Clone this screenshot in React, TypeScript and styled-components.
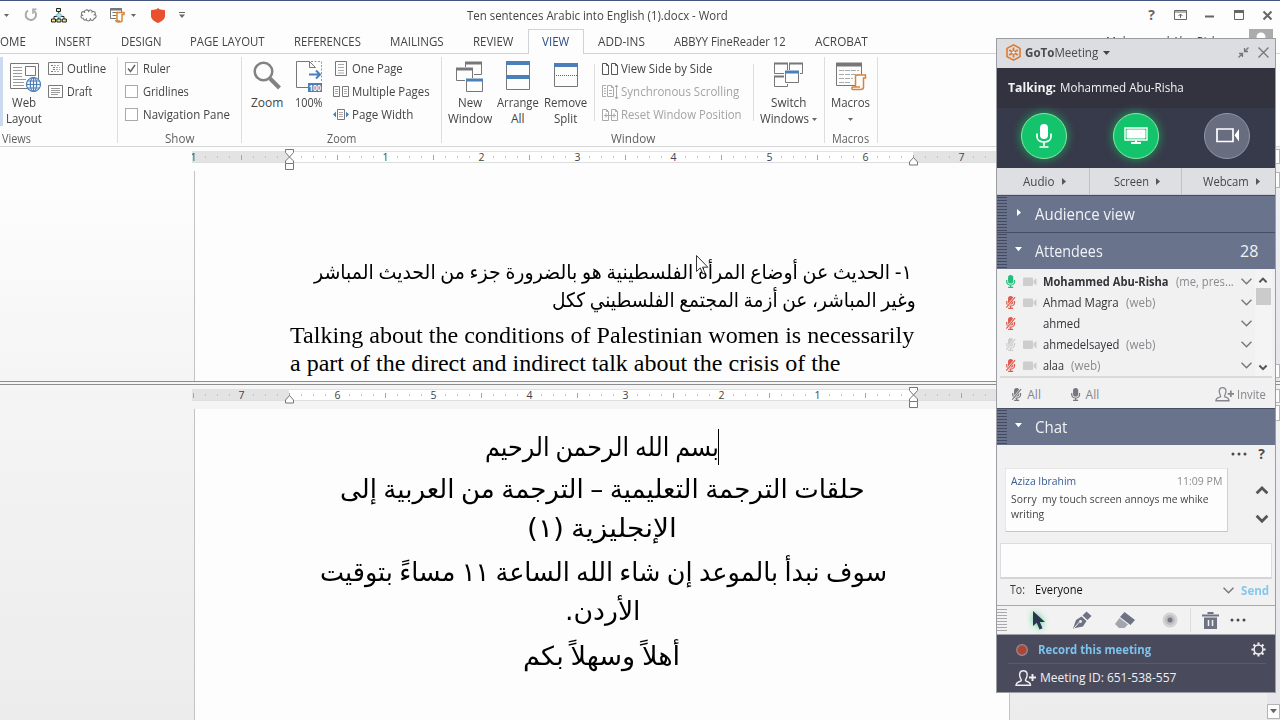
import React, { useLayoutEffect, useRef, useState } from 'react';
import styled, { createGlobalStyle } from 'styled-components';

const Global = createGlobalStyle`
  * { box-sizing: border-box; }
  body { margin: 0; background: #fdfdfd; overflow: hidden; }
  svg { display: block; flex: none; overflow: visible; }
`;

/* ---------- text that occupies an exact width ---------- */

const FitBox = styled.span<{ $w: number }>`
  display: inline-block;
  flex: none;
  width: ${p => p.$w}px;
  white-space: pre;
  text-align: left;
  direction: ltr;
`;
const FitInner = styled.span`
  display: inline-block;
  transform-origin: 0 50%;
`;

function Fit({ w, rtl, className, children }: { w: number; rtl?: boolean; className?: string; children: React.ReactNode }) {
  const ref = useRef<HTMLSpanElement>(null);
  const [scale, setScale] = useState(1);
  useLayoutEffect(() => {
    if (ref.current && ref.current.offsetWidth) setScale(w / ref.current.offsetWidth);
  }, [w, children]);
  return (
    <FitBox $w={w} className={className}>
      <FitInner ref={ref} dir={rtl ? 'rtl' : 'ltr'} style={{ transform: `scaleX(${scale})` }}>{children}</FitInner>
    </FitBox>
  );
}

const Gap = styled.span<{ $w: number }>`
  width: ${p => p.$w}px;
  flex: none;
`;

/* ---------- word window ---------- */

const Screen = styled.div`
  position: relative;
  width: 1280px;
  height: 720px;
  overflow: hidden;
  display: flex;
  flex-direction: column;
  background: #fdfdfd;
  border-top: 1px solid #43557c;
  color: #444;
  font: 12px/16px "Open Sans", "Noto Sans", sans-serif;
`;

const TitleBar = styled.div`
  display: flex;
  align-items: center;
  height: 28px;
  flex: none;
`;
const QuickAccess = styled.div`
  display: flex;
  align-items: center;
  width: 467px;
`;
const Title = styled(Fit)`
  padding-top: 2px;
`;
const QatItem = styled.span<{ $w: number; $gap: number }>`
  display: flex;
  justify-content: center;
  width: ${p => p.$w}px;
  margin-left: ${p => p.$gap}px;
`;
const WindowButtons = styled.div`
  display: flex;
  margin-left: auto;
  margin-right: -2px;
  flex: none;
`;
const WindowButton = styled.span`
  width: 29px;
  height: 20px;
  display: flex;
  align-items: center;
  justify-content: center;
  font-weight: 700;
  font-size: 14px;
  color: #666;
`;

const Tabs = styled.div`
  display: flex;
  height: 25px;
  flex: none;
  border-bottom: 1px solid #d0d4d3;
`;
const Tab = styled.span<{ $active?: boolean }>`
  display: flex;
  align-items: center;
  height: ${p => (p.$active ? 25 : 24)}px;
  padding: 0 13.5px;
  flex: none;
  border: 1px solid ${p => (p.$active ? '#ced3d6' : 'transparent')};
  border-bottom: 0;
  background: ${p => (p.$active ? '#fdfdfd' : 'transparent')};
  color: ${p => (p.$active ? '#2b4d84' : '#444')};
  &:first-child { margin-left: -14.5px; }
`;
const Account = styled.div`
  display: flex;
  align-items: flex-start;
  margin-left: auto;
  padding-right: 7px;
  gap: 24px;
`;
const AccountName = styled(Fit)`
  padding-top: 5px;
`;

const Ribbon = styled.div`
  display: flex;
  height: 93px;
  flex: none;
  padding-top: 3px;
  border-bottom: 1px solid #d3d6d5;
`;
const Group = styled.div<{ $w: number }>`
  display: flex;
  flex-direction: column;
  align-items: center;
  width: ${p => p.$w}px;
  height: 86px;
  border-right: 1px solid #dcdedd;
  flex: none;
`;
const GroupBody = styled.div`
  display: flex;
  width: 100%;
  height: 74px;
  flex: none;
`;
const GroupName = styled.div<{ $shift?: number }>`
  color: #5f5f5f;
  height: 16px;
  margin-left: ${p => p.$shift || 0}px;
`;
const Big = styled.div<{ $w: number; $gap?: number }>`
  display: flex;
  flex-direction: column;
  align-items: center;
  width: ${p => p.$w}px;
  margin-left: ${p => p.$gap || 0}px;
  flex: none;
`;
const BigIcon = styled.div`
  height: 38px;
  width: 36px;
`;
const BigLine = styled.div`
  display: flex;
  align-items: center;
  gap: 3px;
  height: 16px;
`;
const Stack = styled.div<{ $gap: number }>`
  display: flex;
  flex-direction: column;
  margin-left: ${p => p.$gap}px;
`;
const Small = styled.div<{ $muted?: boolean; $icon: number }>`
  display: grid;
  grid-template-columns: ${p => p.$icon}px auto;
  align-items: center;
  height: 23px;
  color: ${p => (p.$muted ? '#a3a3a3' : '#444')};
`;
const Check = styled.span`
  width: 13px;
  height: 13px;
  border: 1px solid #a9a9a9;
  background: #fff;
`;
const InnerRule = styled.span<{ $gap: number }>`
  width: 1px;
  height: 57px;
  margin: 7px 0 0 ${p => p.$gap}px;
  background: #dcdedd;
`;
const PressedEdge = styled.span`
  width: 3px;
  height: 69px;
  background: #cbdaee;
  flex: none;
`;

/* ---------- document ---------- */

const Workspace = styled.div`
  display: flex;
  flex-direction: column;
  flex: 1;
  background: linear-gradient(#fdfdfd 0%, #fcfcfc 10%, #f4f4f4 45%, #ececec 100%);
`;
const Pane = styled.div<{ $h?: number }>`
  display: flex;
  ${p => (p.$h ? `height: ${p.$h}px; flex: none;` : 'flex: 1;')}
  overflow: hidden;
`;
const Canvas = styled.div`
  flex: 1;
  display: flex;
  flex-direction: column;
`;
const RulerRow = styled.div`
  position: relative;
  display: flex;
  align-items: center;
  width: 828px;
  height: 12px;
  margin: 4px 0 0 187px;
  background: linear-gradient(90deg, transparent 5px, #e3e3e3 5px, #e3e3e3 102px, #fff 102px, #fff 726px, #e3e3e3 726px);
  box-shadow: inset 0 1px #e2e2e2, inset 0 -1px #dedede;
  clip-path: inset(-10px 0 -12px 5px);
  flex: none;
`;
const Mark = styled.span`
  width: 12px;
  flex: none;
  display: flex;
  justify-content: center;
  padding-left: 1px;
  font-size: 10.5px;
  line-height: 12px;
  color: #444;
`;
const Tick = styled.i<{ $h: number }>`
  width: 1px;
  height: ${p => p.$h}px;
  background: ${p => (p.$h > 3 ? '#a5a5a5' : '#c4c4c4')};
`;
const Handle = styled.svg<{ $x: number }>`
  position: absolute;
  left: ${p => p.$x}px;
  top: -2px;
`;
const Page = styled.div<{ $pad: number }>`
  flex: 1;
  width: 816px;
  margin: 8px 0 0 194px;
  padding: ${p => p.$pad}px 95px 0;
  background: #fdfdfd;
  border: solid #c3c3c3;
  border-width: 0 1px;
  color: #000;
  overflow: hidden;
`;
const Arabic = styled.div<{ $size: number; $h: number; $l: number; $spacing?: number }>`
  font-family: "DejaVu Sans", sans-serif;
  font-size: ${p => p.$size}px;
  height: ${p => p.$h}px;
  line-height: ${p => p.$h}px;
  padding-left: ${p => p.$l}px;
  word-spacing: -.07em;
  display: flex;
`;
const English = styled.div`
  font: 24px/28px "Liberation Serif", serif;
  height: 28px;
  white-space: nowrap;
`;
const Translation = styled.div`
  padding-top: 6px;
`;
const Caret = styled.i`
  width: 1px;
  height: 36px;
  margin: 2px 0 0 -1px;
  background: #000;
`;
const Splitter = styled.div`
  height: 4px;
  flex: none;
  border: solid #8d8f8e;
  border-width: 1px 0;
  background: #f6f6f6;
`;
const Scroll = styled.div`
  display: flex;
  flex-direction: column;
  width: 13px;
  background: linear-gradient(#f0f1f5, #e6e6ea);
`;
const ScrollBox = styled.div<{ $h: number; $top: number }>`
  display: flex;
  align-items: center;
  justify-content: center;
  height: ${p => p.$h}px;
  margin-top: ${p => p.$top}px;
  border: 1px solid #b4b4b4;
  background: #fdfdfd;
  flex: none;
`;
const Pointer = styled.svg`
  position: absolute;
  left: 696px;
  top: 254px;
`;

/* ---------- meeting panel ---------- */

const Panel = styled.section`
  position: absolute;
  left: 996px;
  top: 37px;
  width: 280px;
  height: 655px;
  display: flex;
  flex-direction: column;
  border: 1px solid #9b9da3;
  background: #f1f1f1;
`;
const PanelHead = styled.header`
  display: flex;
  align-items: center;
  height: 29px;
  padding: 0 6px 2px 9px;
  background: #dcdde1;
  color: #4a4a4f;
  font-size: 13px;
  flex: none;
`;
const Brand = styled(Fit)`
  margin: 0 5px 1px 4px;
`;
const Talking = styled.div`
  display: flex;
  align-items: center;
  gap: 4px;
  height: 40px;
  padding: 0 0 0 11px;
  background: #33333f;
  color: #f4f4f6;
  flex: none;
`;
const Controls = styled.div`
  display: grid;
  grid-template-columns: 93px 91px 91px;
  height: 60px;
  align-items: center;
  justify-items: center;
  padding-bottom: 5px;
  background: #373a4a;
  flex: none;
`;
const Round = styled.span<{ $on?: boolean }>`
  width: 46px;
  height: 46px;
  border-radius: 50%;
  display: flex;
  align-items: center;
  justify-content: center;
  border: 1.5px solid ${p => (p.$on ? '#8fe6a6' : '#9298a8')};
  background: ${p => (p.$on ? '#14c46c' : '#686e80')};
  box-shadow: ${p => (p.$on ? '0 0 9px 1px rgba(20, 190, 100, .65)' : 'none')};
`;
const Sources = styled.div`
  display: grid;
  grid-template-columns: 93px 92px 93px;
  height: 27px;
  background: #dddfe3;
  border-bottom: 1px solid #c9cbd1;
  flex: none;
`;
const Source = styled.span`
  display: flex;
  align-items: center;
  justify-content: center;
  gap: 7px;
  padding: 1px 0 0 2px;
  border-right: 1px solid #bfc2c9;
  color: #45454c;
  &:last-child { border-right: 0; padding-left: 6px; }
`;
const Section = styled.div`
  display: flex;
  align-items: center;
  height: 37px;
  border-top: 1px solid #464e65;
  background: #69748c;
  color: #f1f2f6;
  font-size: 16px;
  line-height: 22px;
  flex: none;
`;
const Grip = styled.span<{ $light?: boolean }>`
  align-self: stretch;
  width: 10px;
  margin: ${p => (p.$light ? '3px 0' : '1px 0 0')};
  background: repeating-linear-gradient(${p => (p.$light ? '#a9a9a9' : '#434a61')} 0 1px, transparent 1px 3px);
`;
const SectionMark = styled.span`
  display: flex;
  align-items: center;
  justify-content: center;
  width: 28px;
  padding: 0 5px 4px 0;
`;
const AttendeeArea = styled.div`
  display: flex;
  height: 109px;
  margin: 0 3px;
  border-bottom: 2px solid #dadada;
  flex: none;
`;
const AttendeeList = styled.div`
  width: 256px;
  padding-top: 2px;
`;
const Attendee = styled.div`
  display: flex;
  align-items: center;
  height: 21px;
  color: #33333a;
`;
const MicSlot = styled.span`
  width: 23px;
  padding-left: 6px;
  display: flex;
`;
const CamSlot = styled.span`
  width: 20px;
  display: flex;
`;
const Role = styled.span`
  margin-left: 7px;
  color: #8a8a90;
  display: flex;
`;
const Push = styled.span<{ $end?: number }>`
  margin-left: auto;
  padding-right: ${p => p.$end || 0}px;
  display: flex;
  align-items: center;
`;
const ListScroll = styled.div`
  display: flex;
  flex-direction: column;
  align-items: center;
  width: 17px;
  padding: 9px 1px 6px 0;
  background: #f4f4f4;
`;
const Thumb = styled.span`
  width: 15px;
  height: 17px;
  margin: 5px 0 auto;
  background: #cbcbcb;
`;
const ListFoot = styled.div`
  display: flex;
  align-items: center;
  height: 30px;
  padding: 3px 9px 0 15px;
  color: #85858b;
  flex: none;
`;
const ChatTools = styled.div`
  display: flex;
  align-items: center;
  justify-content: flex-end;
  height: 18px;
  padding-right: 10px;
  gap: 11px;
  color: #4c4c4c;
  font-weight: 700;
  font-size: 14px;
  flex: none;
`;
const ChatRow = styled.div`
  display: flex;
  height: 80px;
  padding: 5px 0 0 8px;
  flex: none;
`;
const Bubble = styled.div`
  width: 223px;
  height: 64px;
  padding: 4px 5px;
  background: #fdfdfd;
  border: 1px solid #e6e6e6;
  border-bottom-color: #c6c6c6;
  border-right-color: #cfcfcf;
  font-size: 11px;
  line-height: 15px;
  color: #444;
`;
const BubbleHead = styled.div`
  display: flex;
  justify-content: space-between;
  height: 18px;
  line-height: 16px;
  color: #8c8c8c;
`;
const Author = styled(Fit)`
  color: #345b92;
`;
const Arrows = styled.div`
  display: flex;
  flex-direction: column;
  gap: 21px;
  padding: 19px 0 0 28px;
`;
const Input = styled.div`
  height: 36px;
  margin: 0 3px;
  background: #fdfdfd;
  border: 1px solid #dcdcdc;
  border-bottom: 2px solid #d5d5d5;
  flex: none;
`;
const Recipient = styled.div`
  display: flex;
  align-items: center;
  height: 26px;
  padding: 0 6px 4px 13px;
  color: #3c3c3c;
  flex: none;
`;
const Everyone = styled(Fit)`
  margin-left: 10px;
  color: #111;
`;
const Send = styled(Fit)`
  margin: 1px 0 0 7px;
  color: #85c8ee;
  font-weight: 700;
`;
const DrawTools = styled.div`
  display: flex;
  align-items: center;
  height: 30px;
  border-top: 1px solid #a9a9a9;
  border-bottom: 1px solid #a0a0a8;
  background: #f2f2f2;
  flex: none;
`;
const Tool = styled.span<{ $w: number; $rule?: boolean }>`
  display: flex;
  align-items: center;
  justify-content: ${p => (p.$rule ? 'flex-start' : 'center')};
  padding-left: ${p => (p.$rule ? 5 : 0)}px;
  width: ${p => p.$w}px;
  height: 24px;
  border-right: ${p => (p.$rule ? '1px solid #dcdcdc' : '0')};
`;
const GlowArrow = styled.svg`
  filter: drop-shadow(0 0 3px #3fdc86);
`;
const Foot = styled.footer`
  flex: 1;
  padding: 0 9px 0 11px;
  background: #494b5c;
  color: #f0f0f4;
`;
const FootRow = styled.div<{ $first?: boolean }>`
  display: flex;
  align-items: center;
  height: ${p => (p.$first ? 29 : 28)}px;
  padding-top: ${p => (p.$first ? 1 : 0)}px;
  ${p => p.$first && 'border-bottom: 1px solid #595c6e; color: #7cc3ee; font-weight: 700;'}
`;

/* ---------- icons ---------- */

const Down = ({ c = '#666', s = 5 }: { c?: string; s?: number }) => (
  <svg width={s} height={s * 0.6} viewBox="0 0 10 6"><path d="M0 0h10L5 6z" fill={c} /></svg>
);
const Right = ({ c = '#55555c' }: { c?: string }) => (
  <svg width="4" height="7" viewBox="0 0 4 7"><path d="M0 0v7l4-3.5z" fill={c} /></svg>
);
const Chevron = ({ up, w = 11, t = 1.5, c = '#777' }: { up?: boolean; w?: number; t?: number; c?: string }) => (
  <svg width={w} height={w * 0.6} viewBox="0 0 10 6" fill="none" stroke={c} strokeWidth={t}>
    <path d={up ? 'M.5 5.3L5 .8l4.500 4.500' : 'M.5 .7L5 5.200 9.500 .7'} />
  </svg>
);
const Mic = ({ c, muted, s = 14 }: { c: string; muted?: boolean; s?: number }) => (
  <svg width={s * 10 / 14} height={s} viewBox="0 0 10 14">
    <rect x="2.200" y="0" width="5.600" height="9.200" rx="2.800" fill={c} />
    <path d="M.8 5.500v1.700a4.200 3.700 0 0 0 8.400 0V5.500M5 11v2M2.300 13.300h5.400" fill="none" stroke={c} strokeWidth="1.300" />
    {muted && <><path d="M9.800 1L.8 12" stroke="#f1f1f1" strokeWidth="2.400" /><path d="M9.800 1.300L.3 12.500" stroke={c} strokeWidth="1.200" /></>}
  </svg>
);
const Cam = () => (
  <svg width="14" height="10" viewBox="0 0 14 10" fill="#cdcdd0"><rect y=".5" width="10" height="8.500" rx="1" /><path d="M13.500 1v7.500l-3-2.500V3.500z" /></svg>
);
const PersonPlus = ({ c, s = 21 }: { c: string; s?: number }) => (
  <svg width={s} height={s * 16 / 21} viewBox="0 0 21 16" fill="none" stroke={c} strokeWidth="1.400">
    <path d="M1 15.200h14.500c0-2.800-2-3.400-4.600-4.200-.8-.6-.4-1.400.2-2.300 1.800-3.400 1.600-7.900-2.700-7.900S3.900 5.300 5.700 8.700c.6.9 1 1.700.2 2.300C3 11.800 1 12.400 1 15.200z" />
    <path d="M14 7.500h7M17.500 4v7" strokeWidth="1.900" />
  </svg>
);
const Dots = () => (
  <svg width="16" height="4" viewBox="0 0 16 4" fill="#4a4a4e"><circle cx="2" cy="2" r="1.500" /><circle cx="8" cy="2" r="1.500" /><circle cx="14" cy="2" r="1.500" /></svg>
);
const Pg = ({ x = 0 }: { x?: number }) => (
  <path transform={`translate(${x} 0)`} d="M.5 .5h4l2 2v9h-6zM4.500 .5v2h2" />
);

/* ---------- parts ---------- */

function Ruler({ label, flip }: { label: (i: number) => string | null; flip?: boolean }) {
  return (
    <RulerRow>
      {Array.from({ length: 69 }, (_, i) => {
        const t = label(i);
        return <Mark key={i}>{t !== null ? t : <Tick $h={i % 4 === 0 ? 5 : 2} />}</Mark>;
      })}
      {[98, 722].map((x, k) => {
        const full = flip ? k === 1 : k === 0;
        return (
          <Handle key={x} $x={x} width="9" height="21" viewBox="0 0 9 21" fill="#fdfdfd" stroke="#777">
            <path d={full ? 'M.5 .5v3L4.500 8 .5 12v2.500h8V12L4.500 8l4-4.500v-3zM.5 14.500v6h8v-6' : 'M.5 16v-3L4.500 8.500l4 4.500v3z'} />
          </Handle>
        );
      })}
    </RulerRow>
  );
}

const topLabel = (i: number) => (i % 8 === 0 && i !== 8 ? String(Math.abs(i / 8 - 1)) : i === 8 ? '' : null);
const bottomLabel = (i: number) => ((i + 4) % 8 === 0 && i < 60 ? String((60 - i) / 8) : i === 60 ? '' : null);

const attendees = [
  { name: 'Mohammed Abu-Risha', w: 126, role: '(me, pres...', rw: 58, mic: '#23bd7c', cam: true, bold: true },
  { name: 'Ahmad Magra', w: 76, role: '(web)', rw: 29, mic: '#df5a4e', muted: true, cam: true },
  { name: 'ahmed', w: 37, mic: '#df5a4e', muted: true },
  { name: 'ahmedelsayed', w: 76, role: '(web)', rw: 29, mic: '#cccccf', muted: true, cam: true },
  { name: 'alaa', w: 21, role: '(web)', rw: 29, mic: '#df5a4e', muted: true, cam: true },
];

const tabs: [string, number][] = [
  ['OME', 26], ['INSERT', 36.5], ['DESIGN', 40.5], ['PAGE LAYOUT', 75], ['REFERENCES', 67], ['MAILINGS', 54],
  ['REVIEW', 40], ['VIEW', 27], ['ADD-INS', 47], ['ABBYY FineReader 12', 112], ['ACROBAT', 53],
];

export default function App() {
  return (
    <>
      <Global />
      <Screen>
        <TitleBar>
          <QuickAccess>
            <QatItem $w={12} $gap={0}><Down /></QatItem>
            <QatItem $w={16} $gap={11}>
              <svg width="14" height="14" viewBox="0 0 14 14" fill="none" stroke="#a8a8a8" strokeWidth="1.900"><path d="M4 2.500a5.200 5.200 0 1 0 6 .2" /><path d="M12.500 1.200H9v4.500" strokeWidth="1.600" /></svg>
            </QatItem>
            <QatItem $w={17} $gap={11}>
              <svg width="16" height="15" viewBox="0 0 16 15" fill="#eef08e" stroke="#222">
                <path d="M7.500 4v7M3 11V8.500h10V11" fill="none" />
                <path d="M8 4.500l3 3-3 3-3-3z" fill="#a6e3ee" stroke="#4b9aaa" strokeWidth=".8" />
                <path d="M5.500 .5h4v3h-4zM.5 11h4v3h-4zM5.900 11h4v3h-4zM11.300 11h4v3h-4z" />
              </svg>
            </QatItem>
            <QatItem $w={18} $gap={12}>
              <svg width="17" height="13" viewBox="0 0 17 13" fill="none" stroke="#777" strokeWidth="1.100"><path d="M3.200 9.300C.8 9.400.2 7 2 6.200.4 4.200 2 2 4.200 2.800 4.800.6 7.400.3 8.500 2c1-1.600 3.600-1.200 3.800.6 2.200-.6 3.800 1.300 2.700 3 1.900 1 1.300 3.700-.8 3.700 0 2-2.400 2.700-3.700 1.300-1 1.900-3.500 1.800-4.200 0-1.100 1.100-2.900.5-3.100-1.300z" /><path d="M4.200 2.800l.9 1M2 6.200l1.200.2M8.500 2l.4 1.200M12.300 2.600l-.8.9M15 5.600l-1.400.4M10.500 10.600l-.3-1.400M6.300 10.600l.3-1.300" /></svg>
            </QatItem>
            <QatItem $w={18} $gap={11}>
              <svg width="16" height="16" viewBox="0 0 16 16" fill="none" stroke="#777"><path d="M7 11.500H1.500v-10h11V5" /><path d="M1 2.500h12" strokeWidth="2" /><path d="M3.500 5.500h5M3.500 8.500h4" /><path d="M8 13.500V5.500h7v2h-2v6c0 2-5 2-6 .5h4" stroke="#d8843c" strokeWidth="1.500" /></svg>
            </QatItem>
            <QatItem $w={9} $gap={3}><Down /></QatItem>
            <QatItem $w={16} $gap={12}>
              <svg width="14" height="15" viewBox="0 0 14 15"><path d="M7 0l1.500 1.300L14 2.200V8c0 3.500-3.500 5.500-7 7-3.500-1.500-7-3.500-7-7V2.200l5.500-.9z" fill="#e8502e" /></svg>
            </QatItem>
            <QatItem $w={11} $gap={10}>
              <svg width="6" height="6" viewBox="0 0 6 6"><path d="M0 .5h6" stroke="#666" /><path d="M0 2.500h6L3 6z" fill="#666" /></svg>
            </QatItem>
          </QuickAccess>
          <Title w={261}>Ten sentences Arabic into English (1).docx - Word</Title>
          <WindowButtons>
            <WindowButton>?</WindowButton>
            <WindowButton><svg width="13" height="10" viewBox="0 0 13 10" fill="none" stroke="#666"><path d="M.5 .5h12v9H.5zM.5 2h12M6.500 8V4M4.500 6l2-2 2 2" /></svg></WindowButton>
            <WindowButton><svg width="9" height="3" viewBox="0 0 9 3"><path d="M0 2.500h9" stroke="#666" strokeWidth="2" /></svg></WindowButton>
            <WindowButton><svg width="10" height="10" viewBox="0 0 10 10" fill="none" stroke="#666"><path d="M.5 1h9v8.500h-9z" /><path d="M0 1.500h10" strokeWidth="3" /></svg></WindowButton>
            <WindowButton><svg width="9" height="9" viewBox="0 0 9 9"><path d="M.5 .5l8 8m0-8l-8 8" stroke="#666" strokeWidth="2" /></svg></WindowButton>
          </WindowButtons>
        </TitleBar>

        <Tabs>
          {tabs.map(([t, w]) => <Tab key={t} $active={t === 'VIEW'}><Fit w={w}>{t}</Fit></Tab>)}
          <Account>
            <AccountName w={119}>Mohammed Abu-Risha</AccountName>
            <svg width="24" height="24" viewBox="0 0 24 24"><path d="M0 0h24v24H0z" fill="#ababab" /><circle cx="12" cy="8" r="4.500" fill="#fff" /></svg>
          </Account>
        </Tabs>

        <Ribbon>
          <Group $w={118}>
            <GroupBody>
              <PressedEdge />
              <Big $w={42}>
                <BigIcon>
                  <svg width="36" height="38" viewBox="-1 0 36 38" fill="none" stroke="#777">
                    <path d="M3.500 6.500h28v25h-28z" fill="#fdfdfd" />
                    <path d="M6 10.500h9M6 13.500h9M6 16.500h9M6 19.500h9M6 22.500h13M6 25.500h11M6 28.500h11" stroke="#9a9a9a" />
                    <path d="M18.500 9.500h10v9h-10z" />
                    <g stroke="#4b7fb8" strokeWidth="1.200"><circle cx="26.500" cy="27.500" r="7" fill="#fdfdfd" /><ellipse cx="26.500" cy="27.500" rx="3.200" ry="7" /><path d="M19.500 27.500h14M20.500 24h12M20.500 31h12M26.500 20.500v14" /></g>
                  </svg>
                </BigIcon>
                <BigLine><Fit w={24}>Web</Fit></BigLine>
                <BigLine><Fit w={36}>Layout</Fit></BigLine>
              </Big>
              <Stack $gap={3}>
                <Small $icon={19}>
                  <svg width="15" height="13" viewBox="0 0 15 13" fill="none" stroke="#777"><path d="M.5 .5h14v12H.5z" /><path d="M3 3.500h2M5 5.500h2M5 7.500h2M3 9.500h2" /><path d="M6 3.500h6M8 5.500h4M8 7.500h4M6 9.500h6" stroke="#aaa" strokeDasharray="2 1" /></svg>
                  <Fit w={39}>Outline</Fit>
                </Small>
                <Small $icon={19}>
                  <svg width="15" height="13" viewBox="0 0 15 13" fill="none" stroke="#777"><path d="M.5 .5h14v12H.5z" /><path d="M3 3.500h9M3 5.500h9M3 7.500h9M3 9.500h7" stroke="#999" /></svg>
                  <Fit w={25.500}>Draft</Fit>
                </Small>
              </Stack>
            </GroupBody>
            <GroupName $shift={-84}><Fit w={29}>Views</Fit></GroupName>
          </Group>

          <Group $w={124}>
            <GroupBody>
              <Stack $gap={7}>
                <Small $icon={18}><Check><svg width="11" height="11" viewBox="0 0 11 11"><path d="M2 5.500l2.500 3L9 2" fill="none" stroke="#666" strokeWidth="1.500" /></svg></Check><Fit w={27}>Ruler</Fit></Small>
                <Small $icon={18}><Check /><Fit w={46}>Gridlines</Fit></Small>
                <Small $icon={18}><Check /><Fit w={87}>Navigation Pane</Fit></Small>
              </Stack>
            </GroupBody>
            <GroupName><Fit w={29}>Show</Fit></GroupName>
          </Group>

          <Group $w={200}>
            <GroupBody>
              <Big $w={48} $gap={1}>
                <BigIcon>
                  <svg width="36" height="38" viewBox="0 0 36 38" fill="none" stroke="#828282"><circle cx="14.500" cy="14.500" r="8.800" strokeWidth="2.500" /><path d="M21 21.500l9.500 9.500" strokeWidth="4" /></svg>
                </BigIcon>
                <BigLine><Fit w={32}>Zoom</Fit></BigLine>
              </Big>
              <Big $w={36}>
                <BigIcon>
                  <svg width="36" height="38" viewBox="0 0 36 38" fill="none" stroke="#777">
                    <path d="M17 30.500H5.500v-26h13l6 6M18.500 4.500v6h6" /><path d="M20 4.500h10.500V24" strokeDasharray="2 1.500" stroke="#999" />
                    <path d="M18 17.500h11M25 13.500l4 4-4 4" stroke="#4b7fb8" strokeWidth="2" />
                    <path d="M17 26h14v9H17z" fill="#4b7fb8" stroke="none" />
                    <text x="24" y="33.500" fontSize="8" fontWeight="700" fill="#fff" stroke="none" textAnchor="middle" textLength="12" lengthAdjust="spacingAndGlyphs">100</text>
                  </svg>
                </BigIcon>
                <BigLine><Fit w={28}>100%</Fit></BigLine>
              </Big>
              <Stack $gap={6}>
                <Small $icon={19}>
                  <svg width="16" height="16" viewBox="-2 0 16 16" fill="none" stroke="#777"><path d="M.5 .5h11v14H.5z" /><path d="M3 3.500h6M3 6.500h6M3 9.500h6M3 12h6" stroke="#aaa" /></svg>
                  <Fit w={51}>One Page</Fit>
                </Small>
                <Small $icon={19}>
                  <svg width="16" height="11" viewBox="0 0 16 11" fill="none" stroke="#777"><path d="M.5 .5h6v10h-6zM9.500 .5h6v10h-6z" /><path d="M2 3.500h3M2 5.500h3M2 7.500h3M11 3.500h3M11 5.500h3M11 7.500h3" stroke="#aaa" /></svg>
                  <Fit w={78}>Multiple Pages</Fit>
                </Small>
                <Small $icon={19}>
                  <svg width="16" height="11" viewBox="0 0 16 11" fill="none" stroke="#777"><path d="M4.500 .5h7v10h-7z" /><path d="M6 3.500h4M6 5.500h4M6 7.500h4" stroke="#aaa" /><path d="M3 2.500v6L0 5.500zM13 2.500v6l3-3z" fill="#4b7fb8" stroke="none" /></svg>
                  <Fit w={61}>Page Width</Fit>
                </Small>
              </Stack>
            </GroupBody>
            <GroupName><Fit w={29}>Zoom</Fit></GroupName>
          </Group>

          <Group $w={383}>
            <GroupBody>
              <Big $w={48} $gap={4}>
                <BigIcon>
                  <svg width="36" height="38" viewBox="0 0 36 38" fill="#fdfdfd" stroke="#777">
                    <path d="M13.500 5.500h16v12h-16z" /><path d="M13 6h17" strokeWidth="3" /><path d="M4.500 11.500h16v12h-16z" stroke="#fdfdfd" strokeWidth="3" /><path d="M4.500 11.500h16v12h-16z" /><path d="M4 12h17" strokeWidth="3" />
                    <path d="M14.500 22.500h16v12h-16z" stroke="#fdfdfd" strokeWidth="3" /><path d="M14.500 22.500h16v12h-16z" /><path d="M14 23h17" strokeWidth="3" stroke="#4b7fb8" />
                  </svg>
                </BigIcon>
                <BigLine><Fit w={24}>New</Fit></BigLine>
                <BigLine><Fit w={44}>Window</Fit></BigLine>
              </Big>
              <Big $w={48}>
                <BigIcon>
                  <svg width="36" height="38" viewBox="0 0 36 38" fill="#fdfdfd" stroke="#777"><path d="M6.500 5.500h23v27h-23z" /><path d="M6 6h24M6 20h24" strokeWidth="4" stroke="#4b7fb8" /></svg>
                </BigIcon>
                <BigLine><Fit w={42}>Arrange</Fit></BigLine>
                <BigLine><Fit w={14}>All</Fit></BigLine>
              </Big>
              <Big $w={47}>
                <BigIcon>
                  <svg width="36" height="38" viewBox="0 0 36 38" fill="#fdfdfd" stroke="#777"><path d="M6.500 6.500h23v23h-23z" /><path d="M6 8h24" strokeWidth="4" stroke="#4b7fb8" /><path d="M8 18.500h21" strokeDasharray="1 1" stroke="#4b5f9a" /></svg>
                </BigIcon>
                <BigLine><Fit w={43}>Remove</Fit></BigLine>
                <BigLine><Fit w={23}>Split</Fit></BigLine>
              </Big>
              <InnerRule $gap={5} />
              <Stack $gap={7}>
                <Small $icon={19}>
                  <svg width="16" height="12" viewBox="0 0 16 12" fill="none" stroke="#555"><Pg /><Pg x={9} /></svg>
                  <Fit w={91}>View Side by Side</Fit>
                </Small>
                <Small $icon={19} $muted>
                  <svg width="16" height="14" viewBox="0 0 16 14" fill="none" stroke="#aaa"><path d="M4 .5H.5v11H4" /><Pg x={5} /><path d="M2 3.500h2M2 6h2M2 8.500h2M7 5.500h3M7 8.500h3M14.500 0v14M13 2l1.500-2L16 2M13 12l1.500 2 1.500-2" /></svg>
                  <Fit w={118}>Synchronous Scrolling</Fit>
                </Small>
                <Small $icon={19} $muted>
                  <svg width="16" height="12" viewBox="0 0 16 12" fill="none" stroke="#aaa"><Pg /><Pg x={9} /><path d="M2 6.500h12M4 4.500v4M12 4.500v4" /></svg>
                  <Fit w={121}>Reset Window Position</Fit>
                </Small>
              </Stack>
              <InnerRule $gap={11} />
              <Big $w={60} $gap={4}>
                <BigIcon>
                  <svg width="36" height="38" viewBox="0 0 36 38" fill="#fdfdfd" stroke="#777">
                    <path d="M4.500 6.500h13v10h-13zM19.500 6.500h13v10h-13zM4.500 19.500h13v10h-13z" /><path d="M4 6.500h14M19 6.500h14M4 19.500h14" strokeWidth="2" />
                    <path d="M15.500 14.500h13v11h-13z" stroke="#fdfdfd" strokeWidth="3" /><path d="M15.500 14.500h13v11h-13z" /><path d="M15 15h14" strokeWidth="3" stroke="#4b7fb8" />
                  </svg>
                </BigIcon>
                <BigLine><Fit w={35}>Switch</Fit></BigLine>
                <BigLine><Fit w={49}>Windows</Fit><Down /></BigLine>
              </Big>
            </GroupBody>
            <GroupName><Fit w={44}>Window</Fit></GroupName>
          </Group>

          <Group $w={53}>
            <GroupBody>
              <Big $w={51}>
                <BigIcon>
                  <svg width="36" height="38" viewBox="0 0 36 38" fill="#fdfdfd" stroke="#777">
                    <path d="M3.500 6.500h25v22h-25z" /><path d="M3 7.500h26" strokeWidth="4" /><path d="M6 13.500h20M6 17.500h20M6 21.500h14M6 25.500h12" stroke="#aaa" strokeDasharray="5 1" />
                    <path d="M22.500 29.500v-10c0-1 1-1.500 2-1.500h8v3h-2v9c0 2-1 2.500-3 2.500h-8c-1.500-1-.5-2 0-2.500h7.500" stroke="#d8843c" strokeWidth="1.500" />
                  </svg>
                </BigIcon>
                <BigLine><Fit w={39}>Macros</Fit></BigLine>
                <BigLine><Down /></BigLine>
              </Big>
            </GroupBody>
            <GroupName $shift={-1}><Fit w={37}>Macros</Fit></GroupName>
          </Group>
        </Ribbon>

        <Workspace>
          <Pane $h={234}>
            <Canvas>
              <Ruler label={topLabel} />
              <Page $pad={87}>
                <Arabic $size={20} $h={28} $l={24}><Fit rtl w={598}>١- الحديث عن أوضاع المرأة الفلسطينية هو بالضرورة جزء من الحديث المباشر</Fit></Arabic>
                <Arabic $size={20} $h={29} $l={262}><Fit rtl w={364}>وغير المباشر، عن أزمة المجتمع الفلسطيني ككل</Fit></Arabic>
                <Translation>
                  <English><Fit w={624}>Talking about the conditions of Palestinian women is necessarily</Fit></English>
                  <English><Fit w={550}>a part of the direct and indirect talk about the crisis of the</Fit></English>
                </Translation>
              </Page>
            </Canvas>
            <Scroll>
              <ScrollBox $h={15} $top={2} />
              <ScrollBox $h={16} $top={8} />
              <ScrollBox $h={14} $top={176}><Down /></ScrollBox>
            </Scroll>
          </Pane>
          <Splitter />
          <Pane>
            <Canvas>
              <Ruler label={bottomLabel} flip />
              <Page $pad={18}>
                <Arabic $size={26} $h={40} $l={195}><Fit rtl w={234}>بسم الله الرحمن الرحيم</Fit><Caret /></Arabic>
                <Arabic $size={26} $h={44} $l={50}><Fit rtl w={525}>حلقات الترجمة التعليمية – الترجمة من العربية إلى</Fit></Arabic>
                <Arabic $size={26} $h={35} $l={237}><Fit rtl w={150}>الإنجليزية (١)</Fit></Arabic>
                <Arabic $size={26} $h={53} $l={30}><Fit rtl w={567}>سوف نبدأ بالموعد إن شاء الله الساعة ١١ مساءً بتوقيت</Fit></Arabic>
                <Arabic $size={26} $h={25} $l={275}><Fit rtl w={76}>الأردن.</Fit></Arabic>
                <Arabic $size={26} $h={65} $l={233}><Fit rtl w={157}>أهلاً وسهلاً بكم</Fit></Arabic>
              </Page>
            </Canvas>
            <Scroll>
              <ScrollBox $h={14} $top={4} />
              <ScrollBox $h={16} $top={2} />
              <ScrollBox $h={15} $top={283}><Down s={7} /></ScrollBox>
            </Scroll>
          </Pane>
        </Workspace>

        <Pointer width="13" height="20" viewBox="0 0 13 20"><path d="M.5 .5v16l3.800-3.600 2.500 6 2.200-1-2.500-5.700h5.300z" fill="#fff" stroke="#333" /></Pointer>

        <Panel>
          <PanelHead>
            <svg width="15" height="17" viewBox="0 0 15 17" fill="none" stroke="#df7526" strokeWidth="1.500"><path d="M7.500 .8l6.500 3.500v8.400l-6.500 3.500L1 12.700V4.300z" strokeLinejoin="round" /><path d="M7.500 3.500v10M3.200 6l8.600 5M11.800 6l-8.600 5" strokeWidth="1.700" /><circle cx="7.500" cy="8.500" r="1.300" fill="#fff" stroke="none" /></svg>
            <Brand w={73}><b>GoTo</b>Meeting</Brand>
            <svg width="7" height="4" viewBox="0 0 7 4"><path d="M0 0h7L3.500 4z" fill="#444" /></svg>
            <Push>
              <svg width="11" height="11" viewBox="0 0 11 11" fill="none" stroke="#777" strokeWidth="1.300"><path d="M10.500 .5L6.500 4.500M6.500 1v3.500H10M.5 10.500l4-4M1 6.500h3.500V10" /></svg>
              <Gap $w={9} />
              <svg width="11" height="11" viewBox="0 0 11 11"><path d="M.5 .5l10 10m0-10l-10 10" stroke="#777" strokeWidth="1.300" /></svg>
            </Push>
          </PanelHead>
          <Talking><Fit w={48}><b>Talking:</b></Fit><Fit w={124}>Mohammed Abu-Risha</Fit></Talking>
          <Controls>
            <Round $on><svg width="16" height="25" viewBox="0 0 16 25" fill="none" stroke="#fff" strokeWidth="1.700"><rect x="4" y="1" width="8" height="15" rx="4" fill="#fff" stroke="none" /><path d="M1 10.500v3c0 3.500 3 5.500 7 5.500s7-2 7-5.500v-3M8 19v4M3.500 24h9" /></svg></Round>
            <Round $on><svg width="24" height="17" viewBox="0 0 24 17" fill="none" stroke="#fff"><path d="M1 1h22v12H1z" strokeWidth="1.400" /><path d="M3 3h18v8H3z" fill="#fff" /><path d="M12 13v2.500M7 16h10" strokeWidth="2" /></svg></Round>
            <Round><svg width="24" height="15" viewBox="-1 0 24 15" fill="none" stroke="#fff"><path d="M1 1h16v12.500H1z" strokeWidth="1.700" /><path d="M23 1v12.500L18.500 7.200z" fill="#fff" stroke="none" /></svg></Round>
          </Controls>
          <Sources>
            <Source><Fit w={32}>Audio</Fit><Right /></Source>
            <Source><Fit w={35}>Screen</Fit><Right /></Source>
            <Source><Fit w={46}>Webcam</Fit><Right /></Source>
          </Sources>
          <Section><Grip /><SectionMark><Right c="#fff" /></SectionMark><Fit w={100}>Audience view</Fit></Section>
          <Section><Grip /><SectionMark><Down c="#fff" s={7} /></SectionMark><Fit w={68}>Attendees</Fit><Push $end={17}><Fit w={18}>28</Fit></Push></Section>
          <AttendeeArea>
            <AttendeeList>
              {attendees.map(a => (
                <Attendee key={a.name}>
                  <MicSlot><Mic c={a.mic} muted={a.muted} s={13} /></MicSlot>
                  <CamSlot>{a.cam && <Cam />}</CamSlot>
                  <Fit w={a.w}>{a.bold ? <b>{a.name}</b> : a.name}</Fit>
                  {a.role && <Role><Fit w={a.rw!}>{a.role}</Fit></Role>}
                  <Push $end={3}><Chevron t={1.300} /></Push>
                </Attendee>
              ))}
            </AttendeeList>
            <ListScroll><Chevron up w={8} t={2.500} c="#555" /><Thumb /><Chevron w={8} t={2.500} c="#555" /></ListScroll>
          </AttendeeArea>
          <ListFoot>
            <Mic c="#77777d" muted s={13} /><Gap $w={6} /><Fit w={14}>All</Fit>
            <Gap $w={30} />
            <Mic c="#77777d" s={13} /><Gap $w={5} /><Fit w={14}>All</Fit>
            <Push><PersonPlus c="#85858b" s={19} /><Gap $w={3} /><Fit w={29}>Invite</Fit></Push>
          </ListFoot>
          <Section><Grip /><SectionMark><Down c="#fff" s={7} /></SectionMark><Fit w={32}>Chat</Fit></Section>
          <ChatTools><Dots /><span>?</span></ChatTools>
          <ChatRow>
            <Bubble>
              <BubbleHead><Author w={65}>Aziza Ibrahim</Author><Fit w={45}>11:09 PM</Fit></BubbleHead>
              <Fit w={198}>{'Sorry  my touch screen annoys me whike'}</Fit>
              <Fit w={33}>writing</Fit>
            </Bubble>
            <Arrows><Chevron up w={12} t={2.300} c="#555" /><Chevron w={12} t={2.300} c="#555" /></Arrows>
          </ChatRow>
          <Input />
          <Recipient><Fit w={15}>To:</Fit><Everyone w={48}>Everyone</Everyone><Push><Chevron t={1.300} /><Send w={28}>Send</Send></Push></Recipient>
          <DrawTools>
            <Grip $light />
            <Tool $w={64}><GlowArrow width="14" height="19" viewBox="0 0 14 19"><path d="M1 0v15l3.700-3.200L7.500 18.500l3-1.300L7.800 11H13z" fill="#2d3350" /></GlowArrow></Tool>
            <Tool $w={22}>
              <svg width="19" height="18" viewBox="0 0 19 18" fill="#6f7283"><path d="M0 17.500L3 9l5.500-3.500 5 4.500-3.500 5.500zM9.500 4.500L13.500 .5l5 4.500-4 4z" /><path d="M1 17l5.500-6" stroke="#f2f2f2" /><circle cx="7.500" cy="10.500" r="1.400" fill="#f2f2f2" /></svg>
            </Tool>
            <Tool $w={64}><svg width="20" height="16" viewBox="0 0 20 16"><path d="M9.500 0L20 8l-4.500 5L5 5z" fill="#6f7283" /><path d="M4.500 6L13 12.500 9.500 16H4L0 12z" fill="#a2a4b0" /></svg></Tool>
            <Tool $w={34} $rule><svg width="16" height="16" viewBox="0 0 16 16"><circle cx="8" cy="8" r="7.500" fill="#d3d3d6" /><circle cx="8" cy="8" r="5" fill="#bdbdc1" /><circle cx="8" cy="8" r="2.500" fill="#77787f" /></svg></Tool>
            <Tool $w={38}><svg width="17" height="17" viewBox="0 0 17 17"><path d="M0 2.500h17v2H0zM5.500 0h6v2h-6zM2 5.500h13V17H2z" fill="#6f7283" /><path d="M6.500 8v6M10.500 8v6" stroke="#f2f2f2" strokeWidth="1.500" /></svg></Tool>
            <Tool $w={17}><Dots /></Tool>
          </DrawTools>
          <Foot>
            <FootRow $first>
              <Gap $w={8} />
              <svg width="12" height="12" viewBox="0 0 12 12"><circle cx="6" cy="6" r="5.300" fill="#ad4638" stroke="#9b8d95" strokeWidth="1.200" /></svg>
              <Gap $w={10} />
              <Fit w={113}>Record this meeting</Fit>
              <Push><svg width="15" height="15" viewBox="-8 -8 16 16" fill="none" stroke="#eee"><circle r="4.700" strokeWidth="1.600" />{[0, 45, 90, 135, 180, 225, 270, 315].map(a => <path key={a} d="M0-5v-2.500" strokeWidth="2.200" transform={`rotate(${a})`} />)}</svg></Push>
            </FootRow>
            <FootRow>
              <Gap $w={7} /><PersonPlus c="#eee" /><Gap $w={4} />
              <Fit w={136}>Meeting ID: 651-538-557</Fit>
            </FootRow>
          </Foot>
        </Panel>
      </Screen>
    </>
  );
}
